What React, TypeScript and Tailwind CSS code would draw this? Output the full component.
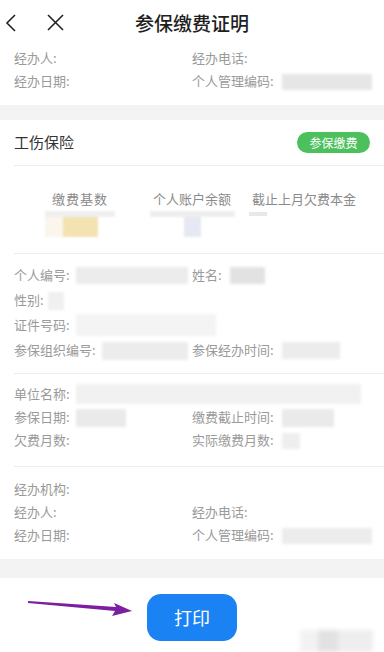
const font = { fontFamily: '"Noto Sans CJK SC", "Noto Sans", sans-serif' };

function Blur({ w, h = 16, tone = "bg-[#e6e6e6]" }: { w: number; h?: number; tone?: string }) {
  return (
    <span
      className={`inline-block align-middle blur-[1.5px] ${tone}`}
      style={{ width: w, height: h }}
    />
  );
}

function Field({ label, value }: { label: string; value?: React.ReactNode }) {
  return (
    <div className="flex items-center whitespace-nowrap">
      <span>{label}:</span>
      {value}
    </div>
  );
}

function Divider() {
  return <div className="ml-[14px] h-px bg-[#ececec]" />;
}

export default function App() {
  return (
    <div style={font} className="relative w-[384px] h-[652px] overflow-hidden bg-white text-[13px] text-[#9a9a9a]">
      {/* Header */}
      <div className="grid grid-cols-[80px_1fr_80px] items-center h-[45px]">
        <div className="flex items-center gap-[30px] pl-[5px]">
          <svg width="12" height="18" viewBox="0 0 12 18" fill="none" stroke="#222" strokeWidth="1.6">
            <polyline points="10,1 2,9 10,17" />
          </svg>
          <svg width="17" height="17" viewBox="0 0 17 17" fill="none" stroke="#222" strokeWidth="1.6">
            <line x1="1" y1="1" x2="16" y2="16" />
            <line x1="16" y1="1" x2="1" y2="16" />
          </svg>
        </div>
        <div className="text-center text-[19px] font-medium text-[#1f1f1f] leading-none">参保缴费证明</div>
        <div />
      </div>

      {/* Partial top section */}
      <div className="grid grid-cols-[178px_1fr] px-[14px] pt-[1px] pb-[13px] auto-rows-[23px] items-center">
        <Field label="经办人" />
        <Field label="经办电话" />
        <Field label="经办日期" />
        <Field label="个人管理编码" value={<span className="ml-[8px]"><Blur w={90} /></span>} />
      </div>

      <div className="h-[15px] bg-[#f3f3f3]" />

      {/* Card header */}
      <div className="flex items-center justify-between h-[45px] px-[14px]">
        <span className="text-[15px] text-[#333]">工伤保险</span>
        <span className="flex items-center justify-center w-[73px] h-[21px] rounded-full bg-[#4cc05c] text-white text-[12px]">
          参保缴费
        </span>
      </div>
      <Divider />

      {/* Summary columns */}
      <div className="grid grid-cols-3 px-[24px] pt-[23px] h-[87px] text-[#8a8a8a]">
        <div className="flex flex-col items-center">
          <span className="tracking-[1px]">缴费基数</span>
          <div className="mt-[2px] flex flex-col items-start blur-[1px]">
            <span className="block w-[70px] h-[6px] bg-[#efefef]" />
            <div className="flex">
              <span className="block w-[18px] h-[20px] bg-[#faf6ec]" />
              <span className="block w-[35px] h-[20px] bg-[#f3e2b2]" />
            </div>
          </div>
        </div>
        <div className="flex flex-col items-center">
          <span>个人账户余额</span>
          <div className="mt-[2px] flex flex-col items-center blur-[1px]">
            <span className="block w-[85px] h-[6px] bg-[#eeeeee]" />
            <span className="block w-[17px] h-[20px] bg-[#e6e9f3]" />
          </div>
        </div>
        <div className="flex flex-col items-center">
          <span>截止上月欠费本金</span>
          <div className="mt-[3px] w-full pl-[1px] blur-[0.5px]">
            <span className="block w-[18px] h-[4px] bg-[#e8e8ea]" />
          </div>
        </div>
      </div>
      <Divider />

      {/* Personal info */}
      <div className="grid grid-cols-[178px_1fr] px-[14px] pt-[8px] pb-[11px] auto-rows-[25px] items-center">
        <Field label="个人编号" value={<span className="ml-[6px]"><Blur w={112} h={17} tone="bg-[#ececec]" /></span>} />
        <Field label="姓名" value={<span className="ml-[8px]"><Blur w={35} h={17} tone="bg-[#e2e2e2]" /></span>} />
        <div className="col-span-2"><Field label="性别" value={<span className="ml-[4px]"><Blur w={16} h={18} tone="bg-[#f0f0f0]" /></span>} /></div>
        <div className="col-span-2"><Field label="证件号码" value={<span className="ml-[6px]"><Blur w={140} h={22} tone="bg-[#f4f4f4]" /></span>} /></div>
        <Field label="参保组织编号" value={<span className="ml-[6px]"><Blur w={86} h={18} tone="bg-[#ececec]" /></span>} />
        <Field label="参保经办时间" value={<span className="ml-[8px]"><Blur w={58} h={17} tone="bg-[#ececec]" /></span>} />
      </div>
      <Divider />

      {/* Unit info */}
      <div className="grid grid-cols-[178px_1fr] px-[14px] pt-[8px] pb-[15px] auto-rows-[23px] items-center">
        <div className="col-span-2"><Field label="单位名称" value={<span className="ml-[6px]"><Blur w={285} h={20} tone="bg-[#f1f1f1]" /></span>} /></div>
        <Field label="参保日期" value={<span className="ml-[6px]"><Blur w={50} h={18} tone="bg-[#eaeaea]" /></span>} />
        <Field label="缴费截止时间" value={<span className="ml-[8px]"><Blur w={52} h={18} tone="bg-[#eaeaea]" /></span>} />
        <Field label="欠费月数" />
        <Field label="实际缴费月数" value={<span className="ml-[8px]"><Blur w={18} h={16} tone="bg-[#eeeeee]" /></span>} />
      </div>
      <Divider />

      {/* Handler info */}
      <div className="grid grid-cols-[178px_1fr] px-[14px] pt-[10px] pb-[13px] auto-rows-[23px] items-center">
        <div className="col-span-2"><Field label="经办机构" /></div>
        <Field label="经办人" />
        <Field label="经办电话" />
        <Field label="经办日期" />
        <Field label="个人管理编码" value={<span className="ml-[8px]"><Blur w={90} tone="bg-[#ececec]" /></span>} />
      </div>

      <div className="h-[19px] bg-[#f3f3f3]" />

      {/* Footer */}
      <div className="flex justify-center pt-[16px]">
        <button className="w-[90px] h-[47px] rounded-[14px] bg-[#1a82f2] text-white text-[18px]">打印</button>
      </div>

      {/* annotation arrow */}
      <svg className="absolute left-[26px] top-[596px]" width="110" height="20" viewBox="0 0 110 20">
        <polygon points="2,5 90,11 88,7 106,15 86,20 89,15 2,7" fill="#7b1fa0" />
      </svg>

      {/* blurred corner */}
      <div className="absolute left-[300px] top-[630px] flex blur-[2px]">
        <span className="block w-[18px] h-[22px] bg-[#f2f2f2]" />
        <span className="block w-[20px] h-[22px] bg-[#e2e2e2]" />
        <span className="block w-[35px] h-[22px] bg-[#eeeeee]" />
      </div>
    </div>
  );
}
